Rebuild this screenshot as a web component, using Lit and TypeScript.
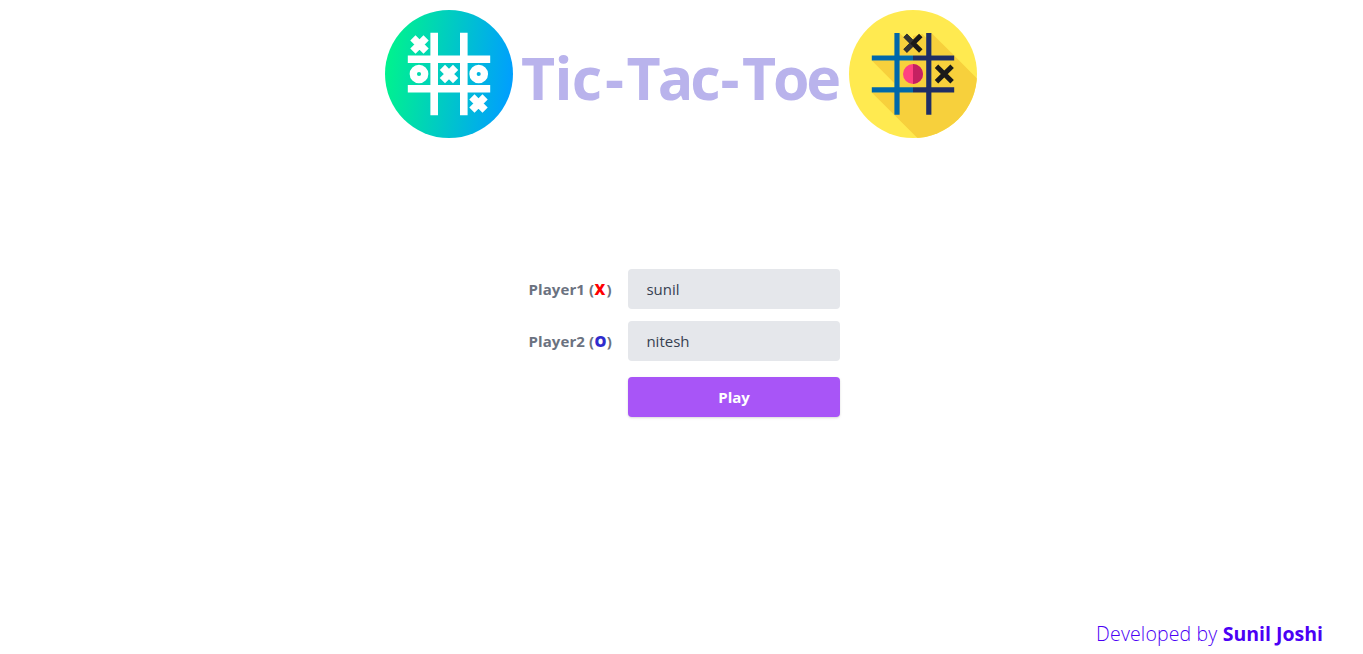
import { LitElement, html, css, svg } from "lit";
import { customElement, state } from "lit/decorators.js";

const cross = (x: number, y: number, arm: number, width: number, color: string) => svg`
  <path
    transform="translate(${x} ${y})"
    d="M${-arm} ${-arm}L${arm} ${arm}M${arm} ${-arm}L${-arm} ${arm}"
    stroke=${color} stroke-width=${width} fill="none"></path>`;

@customElement("gradient-logo")
export class GradientLogo extends LitElement {
  static styles = css`
    :host, svg { display: block; width: 128px; height: 128px; }
  `;

  render() {
    return html`<svg viewBox="0 0 128 128">
      <defs>
        <linearGradient id="bg" x1="0" y1="0.43" x2="1" y2="0.57">
          <stop offset="0" stop-color="#00f38d"></stop>
          <stop offset="1" stop-color="#009eff"></stop>
        </linearGradient>
      </defs>
      <circle cx="64" cy="64" r="64" fill="url(#bg)"></circle>
      <path fill="#fff" d="M45.4 22.8h7.6v82.4h-7.6zM75 22.8h7.6v82.4H75zM22.8 45.4h82.4V53H22.8zM22.8 75h82.4v7.6H22.8z"></path>
      ${cross(34.5, 34.5, 6.6, 7.4, "#fff")}
      ${cross(64, 64, 6.6, 7.4, "#fff")}
      ${cross(93.5, 93.5, 6.6, 7.4, "#fff")}
      <g fill="none" stroke="#fff" stroke-width="7.3">
        <circle cx="34" cy="64" r="5.7"></circle>
        <circle cx="93.7" cy="64" r="5.7"></circle>
      </g>
    </svg>`;
  }
}

@customElement("sunny-logo")
export class SunnyLogo extends LitElement {
  static styles = css`
    :host, svg { display: block; width: 128px; height: 128px; }
  `;

  render() {
    return html`<svg viewBox="0 0 128 128">
      <defs><clipPath id="disc"><circle cx="64" cy="64" r="64"></circle></clipPath></defs>
      <circle cx="64" cy="64" r="64" fill="#ffea50"></circle>
      <g fill="#f7d03c" clip-path="url(#disc)">
        <path d="M22.8 82.4L68.4 128H128V68.6L105.2 45.6V50.6H82.4V77.2H45.4V82.4z"></path>
        <path d="M22.8 50.6H45.4V73.2z"></path>
        <path d="M50.6 23L73 45.4H50.6z"></path>
        <path d="M64 26L73.4 24L77.4 28V45.4H64z"></path>
        <path d="M82.4 23L105.2 45.6H82.4z"></path>
        <path d="M50.6 50.6H77.4V77.2H50.6z"></path>
      </g>
      <path fill="#0068aa" d="M45.4 23h5.2v22.4H64v5.2H50.6v26.6H64v5.2H50.6v22.4h-5.2V82.4H22.8v-5.2h22.6V50.6H22.8v-5.2h22.6z"></path>
      <path fill="#1f2d64" d="M77.2 23h5.2v22.4h22.8v5.2H82.4v26.6h22.8v5.2H82.4v22.4h-5.2V82.4H64v-5.2h13.2V50.6H64v-5.2h13.2z"></path>
      ${cross(64, 33.3, 7.8, 4.9, "#1a1a1a")}
      <path d="M56.2 25.5L62.6 31.9M62.6 34.7L56.2 41.1" stroke="#333" stroke-width="4.9" fill="none"></path>
      ${cross(95.3, 64, 7.8, 4.9, "#1a1a1a")}
      <circle cx="64" cy="64" r="10" fill="#ff4181"></circle>
      <path d="M64 54a10 10 0 0 1 0 20z" fill="#c42161"></path>
    </svg>`;
  }
}

@customElement("app-root")
export class AppRoot extends LitElement {
  static styles = css`
    :host {
      display: flex;
      flex-direction: column;
      box-sizing: border-box;
      height: 654px;
      padding-top: 10px;
      overflow: hidden;
      background: #fff;
      font-family: "Segoe UI", "Open Sans", "Noto Sans", sans-serif;
      font-size: 15px;
    }
    header { display: flex; justify-content: center; padding-right: 1px; }
    h1 {
      display: flex;
      margin: 0;
      width: 336px;
      padding: 7px 0 0 8px;
      box-sizing: border-box;
      white-space: nowrap;
      font-size: 59px;
      line-height: 120px;
      font-weight: 700;
      color: #b9b3ec;
    }
    .tic { width: 84px; letter-spacing: -0.7px; }
    .tac { width: 94px; letter-spacing: -3px; }
    .toe { letter-spacing: -3.2px; }
    .dash { width: 21.5px; }
    form {
      display: grid;
      grid-template-columns: 100px 211.3px;
      margin: 131px 0 0 528.4px;
    }
    label {
      line-height: 40px;
      font-weight: 700;
      color: #6b7280;
      white-space: nowrap;
      letter-spacing: 0.12px;
    }
    .name { margin-right: 0.3px; }
    .x { color: #f00; font-weight: 800; margin-right: 1px; }
    .o { color: #2f2bcd; font-weight: 800; }
    input, button {
      box-sizing: border-box;
      width: 100%;
      height: 40px;
      border: 0;
      border-radius: 4px;
      font: inherit;
      outline: none;
    }
    input { margin-bottom: 12px; padding: 0 18px; background: #e5e7eb; color: #374151; }
    button {
      grid-column: 2;
      margin-top: 4px;
      background: #a855f7;
      color: #fff;
      font-weight: 700;
      box-shadow: 0 1px 3px rgba(0, 0, 0, 0.1), 0 1px 2px rgba(0, 0, 0, 0.06);
    }
    footer {
      margin: auto 40px 6px 0;
      text-align: right;
      font-size: 19.5px;
      line-height: 28px;
      font-weight: 300;
      letter-spacing: 0.15px;
      color: #4b00f5;
    }
    footer b { font-weight: 700; letter-spacing: 0; }
  `;

  @state() private players = ["sunil", "nitesh"];

  render() {
    return html`
      <header>
        <gradient-logo></gradient-logo>
        <h1><span class="tic">Tic</span><span class="dash">-</span><span class="tac">Tac</span><span class="dash">-</span><span class="toe">Toe</span></h1>
        <sunny-logo></sunny-logo>
      </header>
      <form @submit=${(e: Event) => e.preventDefault()}>
        <label for="p1"><span class="name">Player1 (</span><span class="x">X</span>)</label>
        <input id="p1" type="text" .value=${this.players[0]} />
        <label for="p2"><span class="name">Player2 (</span><span class="o">O</span>)</label>
        <input id="p2" type="text" .value=${this.players[1]} />
        <button>Play</button>
      </form>
      <footer>Developed by <b>Sunil Joshi</b></footer>
    `;
  }
}
